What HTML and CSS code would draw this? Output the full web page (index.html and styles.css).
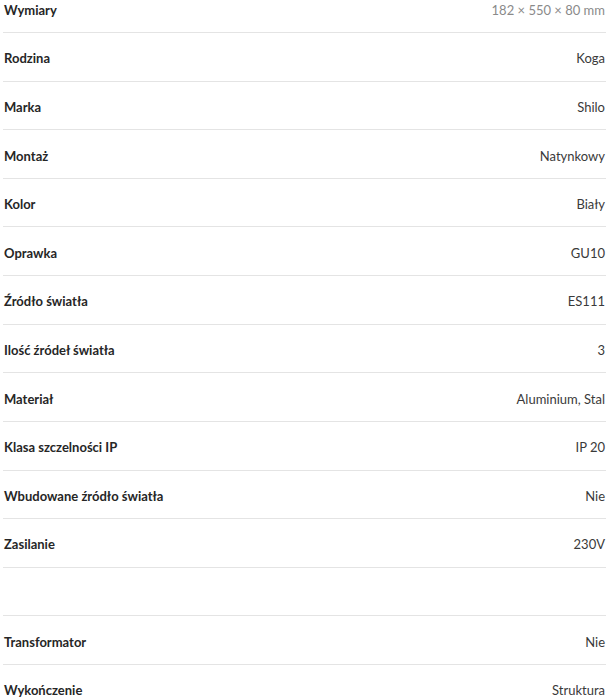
FILE: index.html
```html
<!DOCTYPE html>
<html lang="pl">
<head>
<meta charset="utf-8">
<link rel="stylesheet" href="styles.css">
</head>
<body>
<div class="specs">
  <div class="row"><span class="label">Wymiary</span><span class="value muted">182 × 550 × 80 mm</span></div>
  <div class="row"><span class="label">Rodzina</span><span class="value">Koga</span></div>
  <div class="row"><span class="label">Marka</span><span class="value">Shilo</span></div>
  <div class="row"><span class="label">Montaż</span><span class="value">Natynkowy</span></div>
  <div class="row"><span class="label">Kolor</span><span class="value">Biały</span></div>
  <div class="row"><span class="label">Oprawka</span><span class="value">GU10</span></div>
  <div class="row"><span class="label">Źródło światła</span><span class="value">ES111</span></div>
  <div class="row"><span class="label">Ilość źródeł światła</span><span class="value">3</span></div>
  <div class="row"><span class="label">Materiał</span><span class="value">Aluminium, Stal</span></div>
  <div class="row"><span class="label">Klasa szczelności IP</span><span class="value">IP 20</span></div>
  <div class="row"><span class="label">Wbudowane źródło światła</span><span class="value">Nie</span></div>
  <div class="row"><span class="label">Zasilanie</span><span class="value">230V</span></div>
  <div class="row"><span class="label"></span><span class="value"></span></div>
  <div class="row"><span class="label">Transformator</span><span class="value">Nie</span></div>
  <div class="row"><span class="label">Wykończenie</span><span class="value">Struktura</span></div>
</div>
</body>
</html>
```
FILE: styles.css
```css
html, body {
  margin: 0;
  padding: 0;
  background: #ffffff;
  overflow: hidden;
}
body {
  font-family: Lato, "Open Sans", sans-serif;
  font-size: 13px;
}
.specs {
  margin: -15.6px 7px 0 3px;
  display: flex;
  flex-direction: column;
}
.row {
  display: flex;
  justify-content: space-between;
  align-items: center;
  box-sizing: border-box;
  height: 48.62px;
  padding: 3px 1px 0 1px;
  border-bottom: 1px solid #e4e4e4;
}
.label {
  font-weight: 700;
  color: #262626;
}
.value {
  color: #3a3a3a;
}
.value.muted {
  color: #8a8a8a;
}
```
